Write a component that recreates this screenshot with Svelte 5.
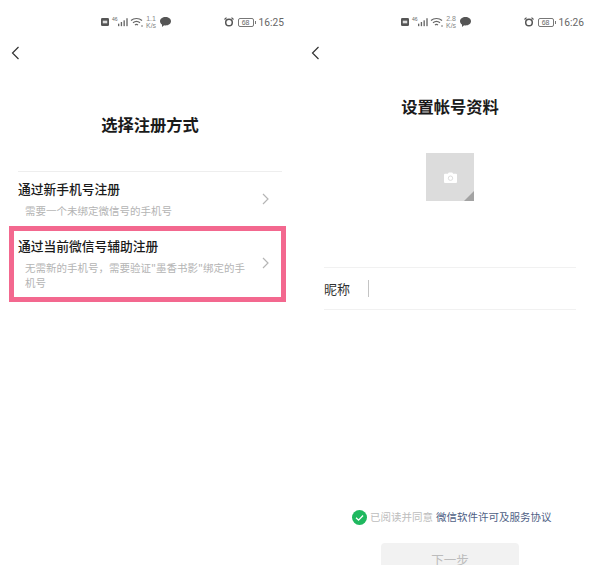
<script>
	const screens = [
		{ speed: '1.1', time: '16:25' },
		{ speed: '2.8', time: '16:26' }
	];
</script>

{#snippet statusBar(speed, time)}
	<div class="status">
		<svg class="hd" width="8" height="8" viewBox="0 0 9 9"><rect width="9" height="9" rx="1.500" fill="#555" /><rect x="2" y="3" width="5" height="3" fill="#ddd" /></svg>
		<span class="net">46</span>
		<svg width="10" height="10" viewBox="0 0 12 10"><g fill="#666"><rect x="0" y="7" width="1.600" height="3" /><rect x="3.300" y="5" width="1.600" height="5" /><rect x="6.600" y="3" width="1.600" height="7" /><rect x="10" y="0.500" width="1.600" height="9.500" /></g></svg>
		<svg class="wifi" width="13" height="10" viewBox="0 0 13 10"><g fill="none" stroke="#666" stroke-width="1.200"><path d="M1 3.500C4 .8 9 .8 12 3.500" /><path d="M3 5.800c2-1.700 5-1.700 7 0" /><path d="M5 8c.9-.7 2.100-.7 3 0" /></g><circle cx="12" cy="9" r="0.800" fill="#666" /></svg>
		<span class="speed">{speed}<br />K/s</span>
		<svg class="bubble" width="11" height="10" viewBox="0 0 11 10"><path d="M5.500 0C8.500 0 11 1.800 11 4.200S8.500 8.400 5.500 8.400c-.5 0-1 0-1.400-.2L2 10V7.500C.8 6.700 0 5.500 0 4.200 0 1.800 2.500 0 5.500 0Z" fill="#555" /></svg>
		<svg class="alarm" width="10" height="10" viewBox="0 0 10 10"><circle cx="5" cy="5.500" r="3.300" fill="none" stroke="#555" stroke-width="1.500" /><path d="M.5 2.500 2.500.6M9.500 2.500 7.500.6" stroke="#555" stroke-width="1.200" /></svg>
		<span class="battery"><span class="level">68</span></span>
		<span class="tip"></span>
		<span class="time">{time}</span>
	</div>
{/snippet}

{#snippet back()}
	<svg class="back" width="9" height="14" viewBox="0 0 9 14"><path d="M7.500 1 1.500 7l6 6" fill="none" stroke="#333" stroke-width="1.200" /></svg>
{/snippet}

{#snippet chevron()}
	<svg class="chevron" width="7" height="12" viewBox="0 0 7 12"><path d="M1 1l5 5-5 5" fill="none" stroke="#b5b5b5" stroke-width="1.200" /></svg>
{/snippet}

<div class="page">
	<section class="screen left">
		{@render statusBar(screens[0].speed, screens[0].time)}
		{@render back()}
		<h1 class="method-title">选择注册方式</h1>
		<div class="options">
			<div class="option first">
				<div class="option-text">
					<div class="option-name">通过新手机号注册</div>
					<div class="option-desc">需要一个未绑定微信号的手机号</div>
				</div>
				{@render chevron()}
			</div>
			<div class="option second">
				<div class="option-text">
					<div class="option-name">通过当前微信号辅助注册</div>
					<div class="option-desc">无需新的手机号，需要验证"墨香书影"绑定的手机号</div>
				</div>
				{@render chevron()}
			</div>
		</div>
	</section>

	<section class="screen right">
		{@render statusBar(screens[1].speed, screens[1].time)}
		{@render back()}
		<h1 class="profile-title">设置帐号资料</h1>
		<div class="avatar">
			<svg width="13" height="11" viewBox="0 0 13 11"><path d="M1 1.800h2.800L4.800.4h3.400l1 1.400H12a1 1 0 0 1 1 1V10a1 1 0 0 1-1 1H1a1 1 0 0 1-1-1V2.800a1 1 0 0 1 1-1Z" fill="#fff" /><circle cx="6.500" cy="6.200" r="2.200" fill="none" stroke="#ddd" stroke-width="1" /></svg>
			<span class="corner"></span>
		</div>
		<div class="nickname">
			<span class="nick-label">昵称</span>
			<span class="caret"></span>
		</div>
		<div class="agree">
			<svg width="15" height="15" viewBox="0 0 16 16"><circle cx="8" cy="8" r="8" fill="#1fb85f" /><path d="M4.300 8.200 7 10.800l4.800-5" fill="none" stroke="#fff" stroke-width="1.400" /></svg>
			<span class="agree-text">已阅读并同意</span>
			<span class="agree-link">微信软件许可及服务协议</span>
		</div>
		<div class="next">下一步</div>
	</section>
</div>

<style>
	:global(body) {
		background: #fff;
	}

	.page {
		display: flex;
		width: 600px;
		height: 565px;
		overflow: hidden;
		font-family: 'Noto Sans CJK SC', 'Liberation Sans', sans-serif;
		color: #1a1a1a;
	}

	.screen {
		display: flex;
		flex-direction: column;
		flex: 0 0 300px;
		box-sizing: border-box;
		min-width: 0;
	}

	.screen > * {
		flex: none;
	}

	.status {
		display: flex;
		align-items: center;
		height: 14px;
		margin-top: 15px;
		padding-left: 101px;
		color: #666;
	}

	.net {
		font-size: 5px;
		line-height: 5px;
		margin: -6px 0 0 3px;
		font-family: 'Liberation Sans', sans-serif;
	}

	.wifi {
		margin-left: 2px;
	}

	.speed {
		width: 13px;
		margin-left: 2px;
		font-size: 7px;
		line-height: 7px;
		text-align: center;
		color: #888;
		font-family: 'Liberation Sans', sans-serif;
	}

	.bubble {
		margin-left: 2px;
	}

	.alarm {
		margin-left: 53px;
	}

	.battery {
		display: flex;
		align-items: center;
		justify-content: center;
		box-sizing: border-box;
		width: 16px;
		height: 9px;
		margin-left: 4px;
		border: 1px solid #777;
		border-radius: 2px;
	}

	.level {
		font-size: 7px;
		line-height: 7px;
		font-family: 'Liberation Sans', sans-serif;
	}

	.tip {
		width: 1px;
		height: 3px;
		margin-left: 1px;
		background: #777;
	}

	.time {
		margin-left: 3px;
		font-size: 10.200px;
		color: #666;
		font-family: 'Roboto', sans-serif;
	}

	.back {
		align-self: flex-start;
		margin-top: 17px;
		margin-left: 11px;
	}

	h1 {
		margin: 0;
		font-size: 16.300px;
		line-height: 22px;
		font-weight: 700;
		text-align: center;
		color: #1a1a1a;
	}

	.method-title {
		margin-top: 53px;
	}

	.profile-title {
		margin-top: 35px;
	}

	.options {
		margin: 36px 14px 0 9px;
	}

	.option {
		display: flex;
		align-items: center;
		justify-content: space-between;
		box-sizing: border-box;
	}

	.option-name {
		font-size: 12.750px;
		line-height: 18px;
		font-weight: 500;
	}

	.option-desc {
		margin-top: 5px;
		padding-left: 7px;
		font-size: 10.500px;
		line-height: 15px;
		color: #b4b4b4;
	}

	.first {
		height: 55px;
		margin: 0 4px 0 9px;
		border-top: 1px solid #eee;
	}

	.second {
		height: 76px;
		padding: 0 12px 0 4px;
		border: 5px solid #f3688f;
	}

	.first .chevron {
		margin-right: 13px;
	}

	.second .option-text {
		width: 229px;
		margin-top: -2px;
	}

	.second .chevron {
		margin-top: -2px;
	}

	.avatar {
		display: flex;
		position: relative;
		align-items: center;
		justify-content: center;
		align-self: center;
		box-sizing: border-box;
		width: 48px;
		height: 48px;
		margin-top: 36px;
		background: #dcdcdc;
	}

	.corner {
		position: absolute;
		right: 0;
		bottom: 0;
		width: 10px;
		height: 10px;
		background: #a3a3a3;
		clip-path: polygon(100% 0, 100% 100%, 0 100%);
	}

	.nickname {
		display: flex;
		align-items: center;
		box-sizing: border-box;
		height: 43px;
		margin: 66px 24px 0 24px;
		border-top: 1px solid #f1f1f1;
		border-bottom: 1px solid #f1f1f1;
	}

	.nick-label {
		font-size: 13px;
		color: #333;
	}

	.caret {
		width: 1px;
		height: 17px;
		margin-left: 18px;
		background: #c4c4c4;
	}

	.agree {
		display: flex;
		align-items: center;
		margin-top: 199px;
		padding-left: 52px;
		font-size: 10.500px;
		line-height: 16px;
	}

	.agree-text {
		margin-left: 3px;
		color: #bdbdbd;
	}

	.agree-link {
		margin-left: 3px;
		color: #4f5f85;
	}

	.next {
		display: flex;
		align-items: center;
		justify-content: center;
		align-self: center;
		width: 138px;
		height: 33px;
		margin-top: 18px;
		border-radius: 4px;
		font-size: 12.500px;
		color: #bcbcbc;
		background: #f2f2f2;
	}
</style>
